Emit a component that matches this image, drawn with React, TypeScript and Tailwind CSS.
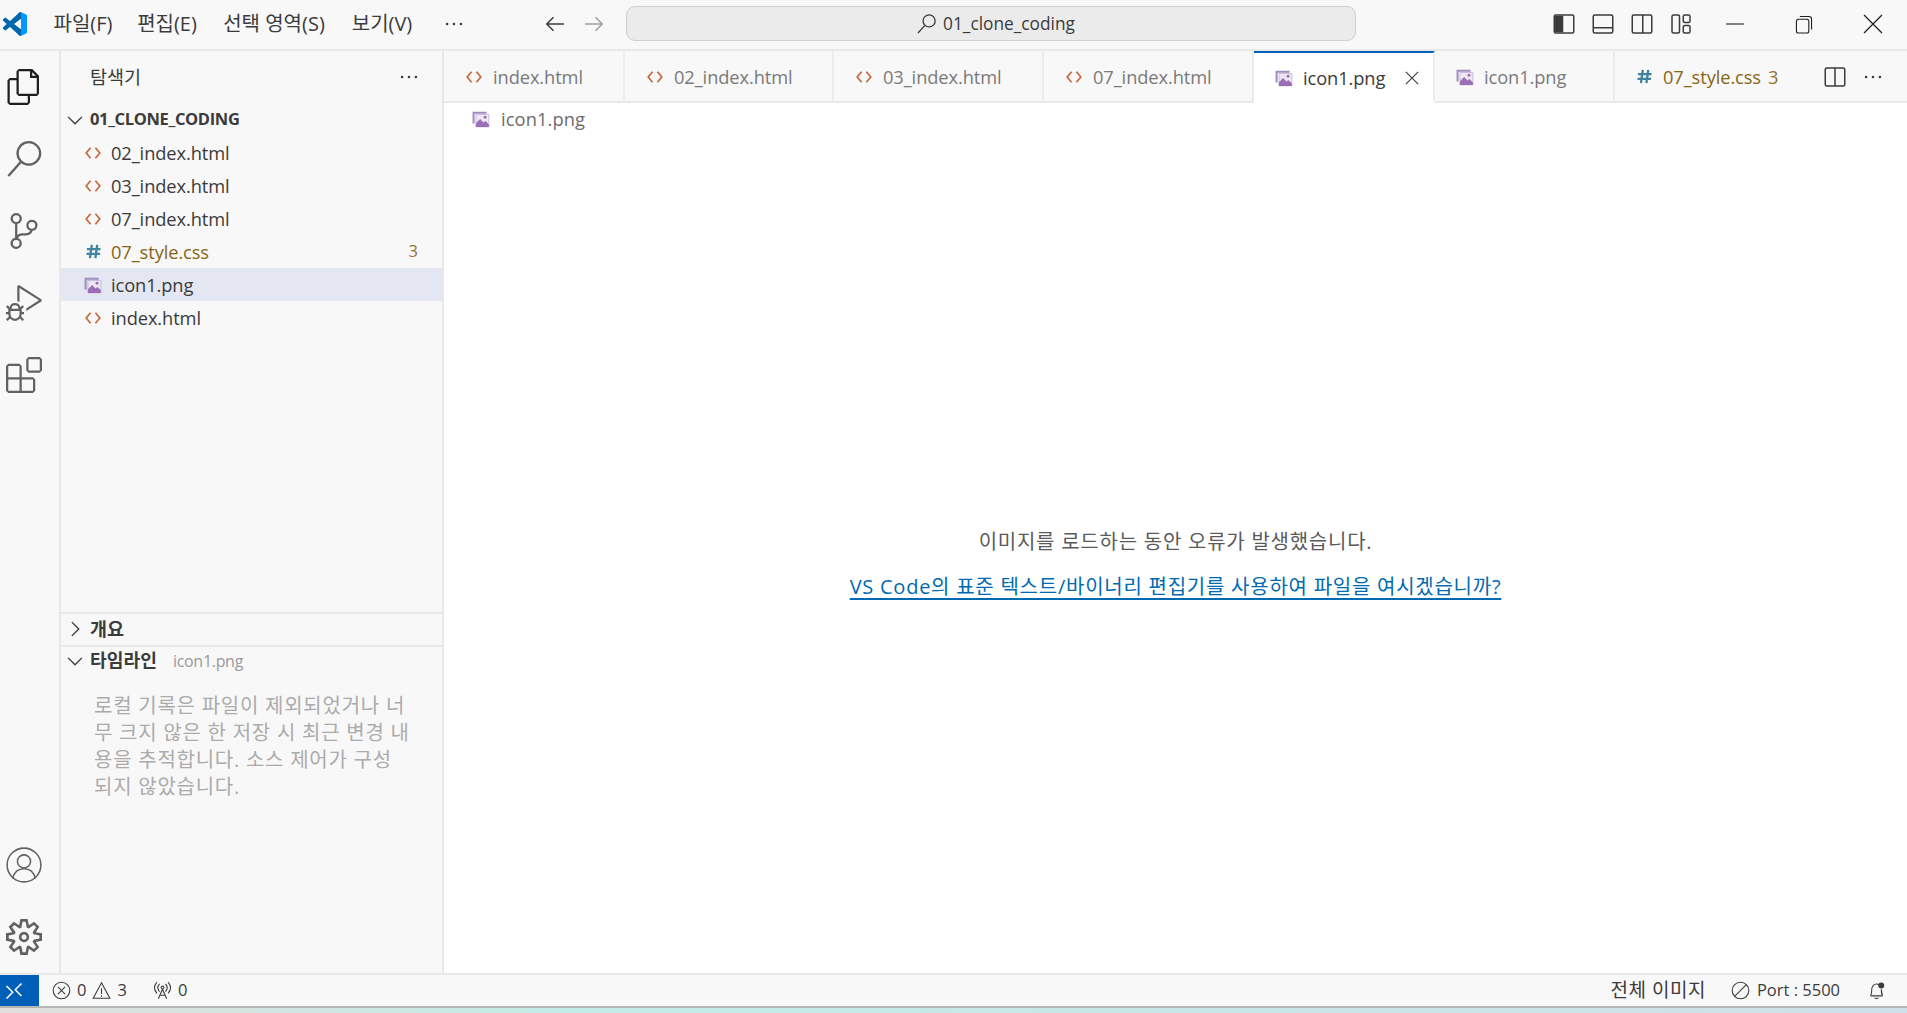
import type { ReactNode } from "react";

const sans = "font-['Open_Sans','Noto_Sans_CJK_KR',sans-serif]";

function Svg({ size, box = 16, className = "", children }: { size: number; box?: number; className?: string; children: ReactNode }) {
  return (
    <svg width={size} height={size} viewBox={`0 0 ${box} ${box}`} className={`shrink-0 ${className}`}>
      {children}
    </svg>
  );
}

function Stroke({ size, className = "", width = 1, children }: { size: number; className?: string; width?: number; children: ReactNode }) {
  return (
    <Svg size={size} className={className}>
      <g fill="none" stroke="currentColor" strokeWidth={width}>{children}</g>
    </Svg>
  );
}

const activityTop = [
  { cls: "text-[#1f1f1f]", d: "M17.5 0h-9L7 1.5V6H2.5L1 7.5v15.07L2.5 24h12.07L16 22.57V18h4.7l1.3-1.43V4.5L17.5 0zm0 2.12l2.38 2.38H17.5V2.12zm-3 20.38h-12v-15H7v9.07L8.5 18h6v4.5zm6-6h-12v-15H16V6h4.5v10.5z" },
  { cls: "text-[#616161]", d: "M15.25 0a8.25 8.25 0 0 0-6.18 13.72L1 22.88l1.12 1 8.05-9.12A8.251 8.251 0 1 0 15.25.01V0zm0 15a6.75 6.75 0 1 1 0-13.5 6.75 6.75 0 0 1 0 13.5z" },
  { cls: "text-[#616161]", d: "M21.007 8.222A3.738 3.738 0 0 0 15.045 5.2a3.737 3.737 0 0 0 1.156 6.583 2.988 2.988 0 0 1-2.668 1.67h-2.99a4.456 4.456 0 0 0-2.989 1.165V7.4a3.737 3.737 0 1 0-1.494 0v9.117a3.776 3.776 0 1 0 1.816.099 2.99 2.99 0 0 1 2.668-1.667h2.99a4.484 4.484 0 0 0 4.223-3.039 3.736 3.736 0 0 0 3.25-3.687zM4.565 3.738a2.242 2.242 0 1 1 4.484 0 2.242 2.242 0 0 1-4.484 0zm4.484 16.441a2.242 2.242 0 1 1-4.484 0 2.242 2.242 0 0 1 4.484 0zm8.221-9.715a2.242 2.242 0 1 1 0-4.485 2.242 2.242 0 0 1 0 4.485z" },
  { cls: "text-[#616161]", d: "M10.94 13.5l-1.32 1.32a3.73 3.73 0 0 0-7.24 0L1.06 13.5 0 14.56l1.72 1.72-.22.22V18H0v1.5h1.5v.08c.077.489.214.966.41 1.42L0 22.94 1.06 24l1.65-1.65A4.308 4.308 0 0 0 6 24a4.31 4.31 0 0 0 3.29-1.65L10.94 24 12 22.94 10.09 21c.198-.464.336-.951.41-1.45v-.1H12V18h-1.5v-1.5l-.22-.22L12 14.56l-1.06-1.06zM6 13.5a2.25 2.25 0 0 1 2.25 2.25h-4.5A2.25 2.25 0 0 1 6 13.5zm3 6a3.33 3.33 0 0 1-3 3 3.33 3.33 0 0 1-3-3v-2.25h6v2.25zm14.76-9.9v1.26L13.5 17.37V15.6l8.5-5.37L9 2v9.46a5.07 5.07 0 0 0-1.5-.72V.63L8.64 0l15.12 9.6z" },
  { cls: "text-[#616161]", d: "M13.5 1.5L15 0h7.5L24 1.5V9l-1.5 1.5H15L13.5 9V1.5zm1.5 0V9h7.5V1.5H15zM0 15V6l1.5-1.5H9L10.5 6v7.5H18l1.5 1.5v7.5L18 24H1.5L0 22.5V15zm9-1.5V6H1.5v7.5H9zM9 15H1.5v7.5H9V15zm1.5 7.5H18V15h-7.5v7.5z" },
];

const gear = "M19.85 8.75l4.15.83v4.84l-4.15.83 2.35 3.52-3.43 3.43-3.52-2.35-.83 4.15H9.58l-.83-4.15-3.52 2.35-3.43-3.43 2.35-3.52L0 14.42V9.58l4.15-.83L1.8 5.23 5.23 1.8l3.52 2.35L9.58 0h4.84l.83 4.15 3.52-2.35 3.43 3.43-2.35 3.52zm-1.57 5.07l4-.81v-2l-4-.81-.54-1.3 2.29-3.43-1.43-1.43-3.43 2.29-1.3-.54-.81-4h-2l-.81 4-1.3.54-3.43-2.29-1.43 1.43L6.38 8.9l-.54 1.3-4 .81v2l4 .81.54 1.3-2.29 3.43 1.43 1.43 3.43-2.29 1.3.54.81 4h2l.81-4 1.3-.54 3.43 2.29 1.43-1.43-2.29-3.43.54-1.3zm-8.186-4.672A3.43 3.43 0 0 1 12 8.57 3.44 3.44 0 0 1 15.43 12a3.43 3.43 0 1 1-5.336-2.852zm.956 4.274c.281.188.612.288.95.288A1.7 1.7 0 0 0 13.71 12a1.71 1.71 0 1 0-2.66 1.422z";

function CodeIcon() {
  return (
    <Svg size={16} className="text-[#c5683a]">
      <path d="M5.6 2.8 1.2 8l4.4 5.2M10.4 2.8 14.8 8l-4.4 5.2" fill="none" stroke="currentColor" strokeWidth="1.7" />
    </Svg>
  );
}

function ImageIcon() {
  return (
    <Svg size={18} className="text-[#9b6fb5]">
      <path d="M0.5 1.5h12.500v1.800H2.300V12H0.500z" fill="#9f8dbf" />
      <path d="M3.500 4h11.500v11H3.500z" fill="#ece7f2" stroke="#b9a6cf" strokeWidth="0.6" />
      <path d="M3.500 15v-3.200L7.200 8l3 3.200 1.600-1.400 3.200 2.800V15z" fill="currentColor" />
      <circle cx="11.600" cy="6.500" r="1.300" fill="currentColor" />
    </Svg>
  );
}

function HashIcon() {
  return (
    <Svg size={15} className="text-[#42849f]">
      <path d="M6.200 1 4.200 15M12 1 10 15M1 5.500h14.500M0.500 10.500h14.500" fill="none" stroke="currentColor" strokeWidth="2.500" />
    </Svg>
  );
}

function More({ className = "" }: { className?: string }) {
  return (
    <Svg size={24} className={className}>
      <g fill="currentColor">
        <circle cx="3.400" cy="8" r="0.850" />
        <circle cx="8" cy="8" r="0.850" />
        <circle cx="12.600" cy="8" r="0.850" />
      </g>
    </Svg>
  );
}

const tabs = [
  { name: "index.html", w: "w-[181px]", icon: <CodeIcon /> },
  { name: "02_index.html", w: "w-[209px]", icon: <CodeIcon /> },
  { name: "03_index.html", w: "w-[210px]", icon: <CodeIcon /> },
  { name: "07_index.html", w: "w-[210px]", icon: <CodeIcon /> },
  { name: "icon1.png", w: "w-[181px]", icon: <ImageIcon />, active: true },
  { name: "icon1.png", w: "w-[180px]", icon: <ImageIcon /> },
];

const files = [
  { name: "02_index.html", icon: <CodeIcon /> },
  { name: "03_index.html", icon: <CodeIcon /> },
  { name: "07_index.html", icon: <CodeIcon /> },
  { name: "07_style.css", icon: <HashIcon />, warn: true },
  { name: "icon1.png", icon: <ImageIcon />, selected: true },
  { name: "index.html", icon: <CodeIcon /> },
];

const menus = [
  { label: "파일(F)", w: "w-[88px]" },
  { label: "편집(E)", w: "w-[80px]" },
  { label: "선택 영역(S)", w: "w-[134px]" },
  { label: "보기(V)", w: "w-[82px]" },
];

function TitleBar() {
  return (
    <div className="flex h-[49px] shrink-0 items-center bg-[#f8f8f8] pb-[2px] text-[#3b3b3b]">
      <div className="flex w-[39px] shrink-0 pl-[3px]">
        <svg width="24" height="24" viewBox="0 0 24 24">
          <path fill="#0098ff" d="M23.15 2.587L18.21.21a1.494 1.494 0 0 0-1.705.29l-9.46 8.63-4.12-3.128a.999.999 0 0 0-1.276.057L.327 7.261A1 1 0 0 0 .326 8.74L3.899 12 .326 15.26a1 1 0 0 0 .001 1.479L1.65 17.94a.999.999 0 0 0 1.276.057l4.12-3.128 9.46 8.63a1.492 1.492 0 0 0 1.704.29l4.942-2.377A1.5 1.5 0 0 0 24 20.06V3.939a1.5 1.5 0 0 0-.85-1.352zm-5.146 14.861L10.826 12l7.178-5.448v10.896z" />
          <path fill="#0065a9" d="M16.5.5 7.05 9.13 2.93 6a1 1 0 0 0-1.28.06L.33 7.26a1 1 0 0 0 0 1.48L3.9 12 .33 15.26a1 1 0 0 0 0 1.48l1.32 1.2a1 1 0 0 0 1.28.06l4.12-3.13 9.46 8.63c.4.4 1 .5 1.5.35V17.45L10.83 12l7.18-5.45V.15C17.5 0 16.9.1 16.5.5z" />
        </svg>
      </div>
      <div className={`flex items-center text-[20px] ${sans}`}>
        {menus.map((m) => (
          <span key={m.label} className={`${m.w} text-center`}>{m.label}</span>
        ))}
      </div>
      <More className="ml-[19px] text-[#3b3b3b]" />
      <div className="ml-[77px] flex items-center gap-[15px]">
        <Stroke size={24} width={1} className="text-[#3b3b3b]">
          <path d="M14 8H2.500M7 3.500 2.500 8 7 12.500" />
        </Stroke>
        <Stroke size={24} width={1} className="text-[#a0a0a0]">
          <path d="M2 8h11.500M9 3.500 13.500 8 9 12.500" />
        </Stroke>
      </div>
      <div className={`ml-[20px] flex h-[35px] w-[730px] shrink-0 items-center justify-center gap-[6px] rounded-[9px] border border-[#cecece] bg-[#ebebeb] text-[17.300px] ${sans}`}>
        <Stroke size={21} width={1}>
          <circle cx="10" cy="6" r="4.600" />
          <path d="M6.800 9.400 1.500 15.200" />
        </Stroke>
        <span className="mr-[-9px]">01_clone_coding</span>
      </div>
      <div className="ml-[196px] flex items-center gap-[15px] text-[#3b3b3b]">
        <Stroke size={24} width={1}>
          <rect x="1.500" y="2" width="13" height="12" rx="1" />
          <rect x="2" y="2.500" width="5.500" height="11" fill="currentColor" stroke="none" />
        </Stroke>
        <Stroke size={24} width={1}>
          <rect x="1.500" y="2" width="13" height="12" rx="1" />
          <path d="M1.500 10.500h13" />
        </Stroke>
        <Stroke size={24} width={1}>
          <rect x="1.500" y="2" width="13" height="12" rx="1" />
          <path d="M8.500 2v12" />
        </Stroke>
        <Stroke size={24} width={1}>
          <rect x="2" y="2" width="5" height="12" rx="1" />
          <rect x="9.500" y="2" width="4.500" height="5" rx="1" />
          <rect x="9.500" y="9" width="4.500" height="5" rx="1" />
        </Stroke>
      </div>
      <div className="ml-[31px] flex items-center text-[#1f1f1f]">
        <Stroke size={22} width={0.8}>
          <path d="M1.500 8h13" />
        </Stroke>
        <Stroke size={22} width={0.8} className="ml-[47px]">
          <rect x="2.500" y="4.500" width="9" height="10" rx="1.500" />
          <path d="M5 2.500h6.500a2 2 0 0 1 2 2V12" />
        </Stroke>
        <Stroke size={22} width={0.9} className="ml-[47px]">
          <path d="M1.500 1.500l13 13M14.500 1.500l-13 13" />
        </Stroke>
      </div>
    </div>
  );
}

function ActivityBar() {
  return (
    <div className="flex w-[61px] shrink-0 flex-col justify-between border-r-2 border-[#e8e8e8] bg-[#f8f8f8] pb-[18px] pl-[6px] pt-[18px]">
      <div className="flex flex-col gap-[36px]">
        {activityTop.map((a) => (
          <Svg key={a.d} size={36} box={24} className={a.cls}>
            <path d={a.d} fill="currentColor" fillRule="evenodd" />
          </Svg>
        ))}
      </div>
      <div className="flex flex-col gap-[36px] text-[#616161]">
        <Stroke size={36} width={0.68}>
          <circle cx="8" cy="8" r="7.500" />
          <circle cx="8" cy="6.400" r="2.900" />
          <path d="M3 14C3.600 11.200 5.400 9.700 8 9.700s4.400 1.500 5 4.300" />
        </Stroke>
        <Svg size={36} box={24}>
          <path d={gear} fill="currentColor" fillRule="evenodd" />
        </Svg>
      </div>
    </div>
  );
}

function Chevron({ open, className = "" }: { open?: boolean; className?: string }) {
  return (
    <Stroke size={20} width={1.100} className={className}>
      <path d={open ? "M2.500 5.500 8 11l5.500-5.500" : "M5.500 2.500 11 8l-5.500 5.500"} />
    </Stroke>
  );
}

function SideBar() {
  return (
    <div className={`flex w-[383px] shrink-0 flex-col border-r-2 border-[#e8e8e8] bg-[#f8f8f8] text-[18.300px] text-[#3b3b3b] ${sans}`}>
      <div className="flex h-[52px] shrink-0 items-center justify-between pl-[29px] pr-[21px]">
        <span className="text-[18.500px] text-[#3b3b3b]">탐색기</span>
        <More />
      </div>
      <div className="flex h-[33px] shrink-0 items-center pl-[4px] text-[16.500px] font-bold">
        <Chevron open />
        <span className="ml-[5px] tracking-[-0.350px]">01_CLONE_CODING</span>
      </div>
      <div className="flex-1">
        {files.map((f) => (
          <div key={f.name} className={`flex h-[33px] items-center pr-[24px] ${f.selected ? "bg-[#e4e6f1]" : ""}`}>
            <span className="ml-[23px] flex w-[18px] items-center justify-center">{f.icon}</span>
            <span className={`ml-[9px] flex-1 tracking-[-0.100px] ${f.warn ? "text-[#876515]" : ""}`}>{f.name}</span>
            {f.warn && <span className="text-[16.500px] text-[#876515] opacity-90">3</span>}
          </div>
        ))}
      </div>
      <div className="flex h-[33px] shrink-0 items-center border-t-2 border-[#e8e8e8] pb-[2px] pl-[4px] text-[18.500px] font-bold">
        <Chevron />
        <span className="ml-[5px]">개요</span>
      </div>
      <div className="h-[328px] shrink-0 border-t-2 border-[#e8e8e8]">
        <div className="flex h-[28px] items-center pl-[4px] text-[18.200px]">
          <Chevron open />
          <span className="ml-[5px] font-bold">타임라인</span>
          <span className="ml-[16px] text-[16px] tracking-[-0.300px] text-[#9a9a9a]">icon1.png</span>
        </div>
        <p className="ml-[33px] mt-[17px] w-[316px] break-all text-[20px] leading-[27px] tracking-[0.750px] text-[#ababab]">
          로컬 기록은 파일이 제외되었거나 너무 크지 않은 한 저장 시 최근 변경 내용을 추적합니다. 소스 제어가 구성되지 않았습니다.
        </p>
      </div>
    </div>
  );
}

function TabBar() {
  return (
    <div className={`flex h-[52px] shrink-0 bg-[#f8f8f8] text-[18.300px] ${sans}`}>
      {tabs.map((t, i) => (
        <div
          key={i}
          className={`flex ${t.w} shrink-0 items-center border-r-2 border-[#ececec] pl-[21px] pt-[1px] ${t.active ? "border-t-2 border-b-2 border-t-[#005fb8] border-b-white bg-white text-[#3b3b3b]" : "border-b-2 border-b-[#e8e8e8] text-[#7a7a7a]"}`}
        >
          <span className="flex w-[18px] items-center justify-center">{t.icon}</span>
          <span className="ml-[10px] tracking-[-0.100px]">{t.name}</span>
          {t.active && (
            <Stroke size={18} width={1} className="ml-auto mr-[12px] text-[#3b3b3b]">
              <path d="M2.500 2.500l11 11M13.500 2.500l-11 11" />
            </Stroke>
          )}
        </div>
      ))}
      <div className="flex flex-1 items-center border-b-2 border-[#e8e8e8] pl-[22px] pt-[1px]">
        <HashIcon />
        <span className="ml-[11px] tracking-[-0.100px] text-[#876515]">07_style.css</span>
        <span className="ml-[7px] text-[#876515] opacity-90">3</span>
        <Stroke size={24} width={1} className="ml-[45px] text-[#3b3b3b]">
          <rect x="1.500" y="2" width="13" height="12" rx="1" />
          <path d="M8 2v12" />
        </Stroke>
        <More className="ml-[14px] text-[#3b3b3b]" />
      </div>
    </div>
  );
}

function Editor() {
  return (
    <div className="flex min-w-0 flex-1 flex-col bg-white">
      <TabBar />
      <div className={`flex h-[33px] shrink-0 items-center pb-[1px] pl-[28px] text-[18.300px] text-[#6b6b6b] ${sans}`}>
        <ImageIcon />
        <span className="ml-[11px] tracking-[0.100px]">icon1.png</span>
      </div>
      <div className={`flex flex-1 flex-col items-center pt-[391px] text-[20px] tracking-[0.750px] ${sans}`}>
        <p className="h-[45px] text-[#5a5a5a]">이미지를 로드하는 동안 오류가 발생했습니다.</p>
        <a className="text-[#006ab1] underline underline-offset-4">VS Code의 표준 텍스트/바이너리 편집기를 사용하여 파일을 여시겠습니까?</a>
      </div>
    </div>
  );
}

function StatusBar() {
  return (
    <div className={`flex h-[33px] shrink-0 items-center border-t-2 border-[#e8e8e8] bg-[#f8f8f8] text-[16.500px] text-[#3b3b3b] ${sans}`}>
      <div className="flex h-full w-[39px] items-center bg-[#005fb8] pl-[4px] text-white">
        <Stroke size={20} width={1.200}>
          <path d="M2 14l5-5-5-5M14 2 9 7l5 5" />
        </Stroke>
      </div>
      <div className="ml-[13px] flex items-center">
        <Stroke size={19} width={0.900}>
          <circle cx="8" cy="8" r="7" />
          <path d="M5 5l6 6M11 5l-6 6" />
        </Stroke>
        <span className="ml-[6px]">0</span>
        <Stroke size={19} width={0.900} className="ml-[6px]">
          <path d="M8 1.500 15 14.500H1zM8 6v5M8 12v1.200" />
        </Stroke>
        <span className="ml-[6px]">3</span>
        <Stroke size={19} width={0.900} className="ml-[26px]">
          <path d="M8 7 4.500 15M8 7l3.500 8M5.800 12h4.400M5.500 2.500c-1.800 2-1.800 4.500 0 6.500M10.500 2.500c1.800 2 1.800 4.500 0 6.500M3.300 1c-2.600 3-2.600 6.500 0 9.500M12.700 1c2.600 3 2.600 6.500 0 9.500" />
          <circle cx="8" cy="5.500" r="1.200" />
        </Stroke>
        <span className="ml-[6px]">0</span>
      </div>
      <div className="ml-auto flex items-center pr-[21px]">
        <span className="text-[19px] tracking-[0.500px]">전체 이미지</span>
        <Stroke size={19} width={0.900} className="ml-[25px]">
          <circle cx="8" cy="8" r="7" />
          <path d="M3 13 13 3" />
        </Stroke>
        <span className="ml-[7px]">Port : 5500</span>
        <svg width="19" height="19" viewBox="0 0 16 16" className="ml-[27px] shrink-0">
          <path d="M3 12.500c1-1.500 1-3 1-5.500 0-2.500 1.800-4.500 4-4.500 1 0 1.800.3 2.500 1M12 7c0 2.500 0 4 1 5.500zM3 12.500h10M6.500 14c.4 1 2.600 1 3 0" fill="none" stroke="currentColor" strokeWidth="0.900" />
          <circle cx="12" cy="3.800" r="2.500" fill="#3b3b3b" />
        </svg>
      </div>
    </div>
  );
}

export default function App() {
  return (
    <div className="flex h-[1013px] w-[1907px] flex-col overflow-hidden bg-[#f8f8f8]">
      <div className="border-b-2 border-[#e8e8e8]">
        <TitleBar />
      </div>
      <div className="flex min-h-0 flex-1">
        <ActivityBar />
        <SideBar />
        <Editor />
      </div>
      <StatusBar />
      <div className="h-[7px] shrink-0 border-t-2 border-[#b5b5b5] bg-gradient-to-r from-[#e0dedb] via-[#c2ece6] via-30% to-[#cfe0e8]" />
    </div>
  );
}
